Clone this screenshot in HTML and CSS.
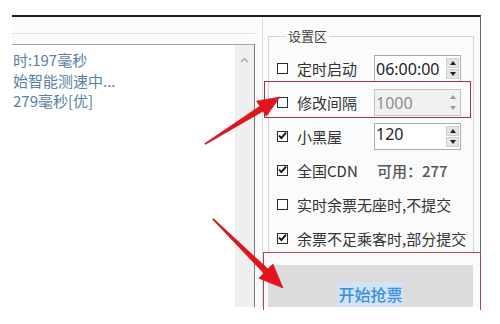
FILE: index.html
```html
<!DOCTYPE html>
<html lang="zh-CN">
<head>
<meta charset="utf-8">
<title>设置区</title>
<link rel="stylesheet" href="styles.css">
</head>
<body>
<div class="window">
  <div class="left">
    <div class="strip"></div>
    <div class="log">
      <div class="log-text">
        <p>时:197毫秒</p>
        <p>始智能测速中...</p>
        <p>279毫秒[优]</p>
      </div>
      <div class="scrollbar">
        <svg width="9" height="6" viewBox="0 0 9 6"><polyline points="1,5 4.5,1.5 8,5" fill="none" stroke="#a9a9a9" stroke-width="1.3"/></svg>
      </div>
    </div>
  </div>
  <div class="right">
    <fieldset class="settings">
      <legend>设置区</legend>
      <div class="row">
        <span class="check"></span><span class="label">定时启动</span>
        <div class="spin"><span class="val">06:00:00</span><span class="btns"><i class="up"></i><i class="down"></i></span></div>
      </div>
      <div class="row">
        <span class="check"></span><span class="label">修改间隔</span>
        <div class="spin disabled"><span class="val">1000</span><span class="btns"><i class="up"></i><i class="down"></i></span></div>
      </div>
      <div class="row">
        <span class="check on"><svg viewBox="0 0 11 11"><polyline points="2,5.6 4.4,8 9,2.6" fill="none" stroke="#111" stroke-width="1.9"/></svg></span><span class="label">小黑屋</span>
        <div class="spin"><span class="val top">120</span><span class="btns"><i class="up"></i><i class="down"></i></span></div>
      </div>
      <div class="row">
        <span class="check on"><svg viewBox="0 0 11 11"><polyline points="2,5.6 4.4,8 9,2.6" fill="none" stroke="#111" stroke-width="1.9"/></svg></span><span class="label">全国CDN</span>
        <span class="avail">可用：277</span>
      </div>
      <div class="row">
        <span class="check"></span><span class="text">实时余票无座时,不提交</span>
      </div>
      <div class="row">
        <span class="check on"><svg viewBox="0 0 11 11"><polyline points="2,5.6 4.4,8 9,2.6" fill="none" stroke="#111" stroke-width="1.9"/></svg></span><span class="text">余票不足乘客时,部分提交</span>
      </div>
    </fieldset>
    <div class="start-panel">
      <button class="start" type="button"><span>开始抢票</span></button>
    </div>
  </div>
</div>
<div class="annot">
  <div class="mark mark-interval"></div>
  <div class="mark mark-start"></div>
  <svg class="arrows" width="500" height="324" viewBox="0 0 500 324">
    <polygon points="205.3,144.4 263,111.2 266.2,116.3 280,97 256.6,101.1 259.8,106.2 204.7,143.6" fill="#e5141c" stroke="#c21018" stroke-width="0.6"/>
    <polygon points="212.6,219.4 263.8,273.3 258.9,278.3 283,288 272.9,264.1 268,269.1 213.4,218.6" fill="#e5141c" stroke="#c21018" stroke-width="0.6"/>
  </svg>
</div>
</body>
</html>
```

FILE: styles.css
```css
html, body {
  margin: 0;
  padding: 0;
}

body {
  width: 500px;
  height: 324px;
  position: relative;
  overflow: hidden;
  background: #ffffff;
  font-family: "Noto Sans CJK SC", "Noto Sans", sans-serif;
  color: #333333;
}

.window {
  box-sizing: border-box;
  margin: 15px 0 0 12px;
  width: 469px;
  height: 292px;
  border-top: 2px solid #1e1e1e;
  border-right: 1px solid #6a6a6a;
  display: flex;
  overflow: hidden;
  background: #fbfbfb;
}

/* left: log */
.left {
  width: 243px;
  flex: none;
  display: flex;
  flex-direction: column;
}

.strip {
  flex: none;
  height: 16px;
  border-bottom: 1px solid #e2e2e2;
}

.log {
  flex: 1;
  margin-top: 10px;
  border-top: 1px solid #a5a5a5;
  border-right: 1px solid #7d7d7d;
  background: #ffffff;
  display: flex;
}

.log-text {
  flex: 1;
  padding: 5px 0 0 1px;
  font-size: 15px;
  line-height: 20.5px;
  color: #5b80a6;
  white-space: nowrap;
  overflow: hidden;
}

.log-text p {
  margin: 0;
}

.scrollbar {
  width: 19px;
  flex: none;
  background: #efefef;
  display: flex;
  justify-content: center;
  align-items: flex-start;
  padding-top: 12px;
  box-sizing: border-box;
}

/* right: settings */
.right {
  flex: 1;
  margin-left: 7px;
  border-left: 1px solid #dadada;
  padding: 0 6px 0 5px;
  display: flex;
  flex-direction: column;
}

.settings {
  box-sizing: border-box;
  height: 224px;
  margin: 12px 0 0;
  padding: 8px 0 0 8px;
  border: 1px solid #d4d4d4;
  flex: none;
}

.settings legend {
  margin-left: 9px;
  padding: 0 2px;
  font-size: 13px;
  line-height: 14px;
  color: #444;
}

.row {
  height: 34px;
  display: flex;
  align-items: center;
  font-size: 15px;
  white-space: nowrap;
}

.check {
  position: relative;
  box-sizing: border-box;
  width: 11px;
  height: 11px;
  border: 1.5px solid #2e2e2e;
  background: #ffffff;
  margin-right: 9px;
  flex: none;
}

.check svg {
  position: absolute;
  left: -1.5px;
  top: -1.5px;
  width: 11px;
  height: 11px;
}

.label {
  width: 77px;
  flex: none;
}

.spin {
  box-sizing: border-box;
  width: 87px;
  height: 27px;
  border: 1px solid #ababab;
  background: #ffffff;
  display: flex;
  flex: none;
}

.spin .val {
  flex: 1;
  font-family: "Noto Sans", "Noto Sans CJK SC", sans-serif;
  font-size: 16px;
  line-height: 26px;
  padding-left: 1px;
  color: #1e1e1e;
}

.spin .val.top {
  line-height: 20px;
}

.spin .btns {
  width: 13px;
  margin: 2px 1px 2px 0;
  display: flex;
  flex-direction: column;
  gap: 1px;
}

.spin .btns i {
  flex: 1;
  background: #e4e4e4;
  border: 1px solid #cfcfcf;
  display: flex;
  justify-content: center;
  align-items: center;
}

.spin .btns i::after {
  content: "";
  border-left: 3px solid transparent;
  border-right: 3px solid transparent;
}

.spin .btns .up::after {
  border-bottom: 4px solid #222;
}

.spin .btns .down::after {
  border-top: 4px solid #222;
}

.spin.disabled {
  background: #f1f1f1;
  border-color: #c4c4c4;
}

.spin.disabled .val {
  color: #8e8e8e;
}

.spin.disabled .btns i {
  background: #f1f1f1;
  border-color: #f1f1f1;
}

.spin.disabled .btns .up::after {
  border-bottom-color: #9a9a9a;
}

.spin.disabled .btns .down::after {
  border-top-color: #9a9a9a;
}

.avail {
  margin-left: 3px;
  color: #555;
  font-weight: 500;
}

.text {
  flex: none;
}

/* start button */
.start-panel {
  margin-top: 12px;
  flex: none;
}

.start {
  display: flex;
  justify-content: center;
  align-items: center;
  width: 205px;
  height: 57px;
  margin: 0;
  padding: 0;
  border: none;
  background: #dcdcde;
  font-family: "Noto Sans CJK SC", sans-serif;
  font-size: 16px;
  font-weight: 500;
  color: #3a8fe0;
}

.start span {
  background: #d3e3f3;
  padding: 0 1px;
}

/* annotations */
.annot {
  position: absolute;
  left: 0;
  top: 0;
  width: 500px;
  height: 324px;
  pointer-events: none;
}

.mark {
  position: absolute;
  box-sizing: border-box;
}

.mark-interval {
  left: 264px;
  top: 81px;
  width: 207px;
  height: 37px;
  border: 1.5px solid #9b3842;
}

.mark-start {
  left: 263px;
  top: 252px;
  width: 218px;
  height: 58px;
  border: 1px solid #b0474e;
  border-bottom: none;
}

.arrows {
  position: absolute;
  left: 0;
  top: 0;
}
```
